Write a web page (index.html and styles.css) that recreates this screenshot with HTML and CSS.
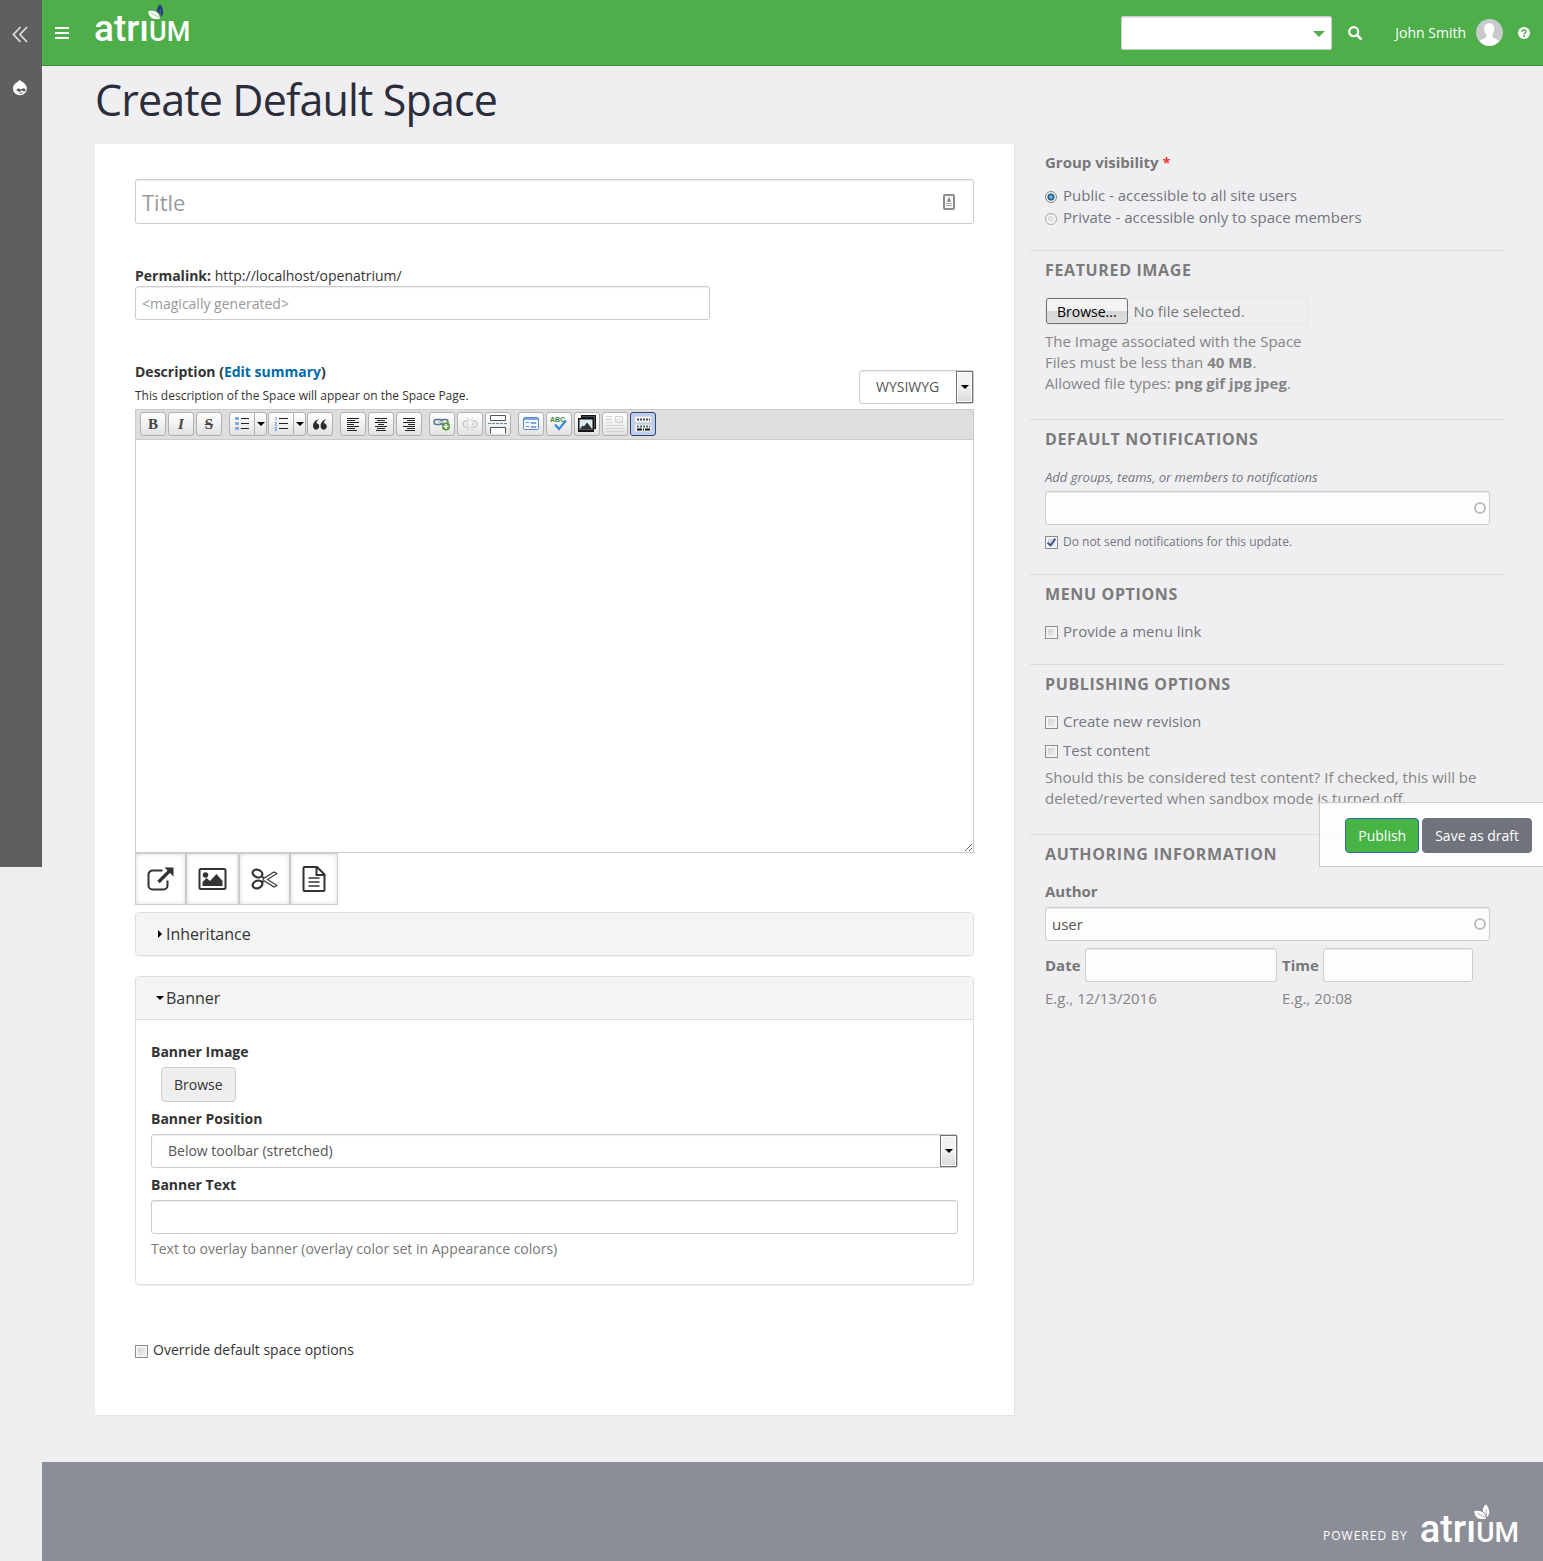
FILE: index.html
```html
<!DOCTYPE html>
<html lang="en">
<head>
<meta charset="utf-8">
<meta name="viewport" content="width=device-width, initial-scale=1">
<title>Create Default Space | Atrium</title>
<link rel="stylesheet" href="styles.css">
</head>
<body>
<div class="layout">
  <nav class="rail" aria-label="Administration">
    <a href="#" class="rail-link rail-collapse" aria-label="Collapse menu"><svg width="16" height="17" viewBox="0 0 16 17" fill="none" stroke="#ddd" stroke-width="1.8"><path d="M8.5 1 1.5 8.500l7 7.500M15 1 8 8.500l7 7.500"/></svg></a>
    <a href="#" class="rail-link" aria-label="Drupal"><svg width="16" height="17" viewBox="0 0 16 17"><path d="M7.500.5c.8 1.800 2.500 2 4.500 3.600 1.700 1.400 2.800 3.300 2.800 5.400 0 4-3.100 6.700-7 6.700S1 13.400 1 9.600C1 7.200 2 5.500 3.800 4 5.500 2.800 7 2.300 7.500.5z" fill="#fff"/><path d="M4.500 11c1-2.300 3-1.800 4.500-.6 1.500-1.300 3.300-1.600 4.300-.5 1 1.800-.6 3.300-2 2.400L9.500 11.500c-1.500 1.500-4 1.900-5-.5z" fill="#5f5f5f"/><path d="M7 13.800q1.800 1 3.600 0" fill="none" stroke="#5f5f5f"/></svg></a>
  </nav>

  <div class="page">
    <header class="topbar">
      <button type="button" class="icon-button menu-toggle" aria-label="Menu"><svg width="14" height="12" viewBox="0 0 14 12" fill="#fff"><path d="M0 0h14v2H0zM0 5h14v2H0zM0 10h14v2H0z"/></svg></button>
      <a href="#" class="brand" aria-label="Atrium home"><span class="brand-lower">atrı</span><span class="brand-caps">UM</span><svg class="brand-leaf" width="16" height="16" viewBox="0 0 16 16"><path d="M.3 7.200C4 6.300 8 7 10 9.500c1 1.300 1.800 3 2 4.900C7 16 .8 15 .3 7.200z" fill="#fff"/><path d="M12 .2c3 3.500 5 9 1 13-.5-2-1.400-3.600-3.400-5C8 6 9.500 2.500 12 .2z" fill="#273a83"/><path d="m3 9 8 4.500M12.200 5v8" fill="none" stroke="#4eae4a" stroke-width=".6"/></svg></a>
      <div class="topbar-tools">
        <div class="search-select">
          <select aria-label="Search in"><option></option></select>
        </div>
        <button type="button" class="icon-button search-button" aria-label="Search"><svg width="14" height="14" viewBox="0 0 14 14" fill="none" stroke="#fff"><circle cx="5.700" cy="5.700" r="4.500" stroke-width="2.200"/><path d="m9 9 3.800 3.800" stroke-width="2.600" stroke-linecap="round"/></svg></button>
        <a href="#" class="user"><span>John Smith</span><svg width="27" height="27" viewBox="0 0 27 27"><circle cx="13.500" cy="13.500" r="13.500" fill="#c9cacc"/><path d="M13.200 4.300c3.500 0 5.400 2.400 5 6-.2 2.500-1 4-2 5.200 0 2.200.2 2.800 1.500 3.500 2 .9 4 1.300 5.300 3.200-4.800 6.400-14.400 6.400-19.200 0C5 20.400 7 19.900 9 19c1.400-.7 1.600-1.400 1.500-3.400-1.200-1.200-2.200-3-2.300-5.400-.2-3.500 1.500-5.900 5-5.900z" fill="#fff"/></svg></a>
        <a href="#" class="help" aria-label="Help"><svg width="12" height="12" viewBox="0 0 12 12"><circle cx="6" cy="6" r="6" fill="#fff"/><path d="M4 4.700c.1-2.300 4.100-2.200 4 0 0 1.300-1.900 1.200-1.900 2.700" fill="none" stroke="#4eae4a" stroke-width="1.500"/><path d="M5.200 8.300h1.700v1.600H5.200z" fill="#4eae4a"/></svg></a>
      </div>
    </header>

    <main class="content">
      <h1>Create Default Space</h1>
      <form class="columns">
        <div class="card">
          <div class="title-field">
            <input type="text" class="input input-title" placeholder="Title" aria-label="Title">
            <svg class="title-icon" width="12" height="16" viewBox="0 0 12 16"><rect x="1" y="1" width="10" height="14" rx="1" fill="#f7f7f7" stroke="#8c8c8c" stroke-width="2"/><path d="m6 3 1.500 3v2h-3V6z" fill="#888"/><path d="M3 9.500h6M3 11.500h6" stroke="#aaa"/></svg>
          </div>

          <div class="permalink">
            <label for="permalink"><b>Permalink:</b> http://localhost/openatrium/</label>
            <input type="text" id="permalink" class="input" placeholder="&lt;magically generated&gt;">
          </div>

          <div class="description-head">
            <div class="description-labels">
              <div><label for="body" class="label">Description</label> <b>(<a href="#">Edit summary</a>)</b></div>
              <p class="note">This description of the Space will appear on the Space Page.</p>
            </div>
            <div class="select-wrap">
              <select class="input select" aria-label="Text format"><option>WYSIWYG</option></select>
            </div>
          </div>

          <div class="editor">
            <div class="toolbar" role="toolbar" aria-label="Editor toolbar">
              <div class="tool-group">
                <button type="button" class="tool tool-bold">B</button>
                <button type="button" class="tool tool-italic">I</button>
                <button type="button" class="tool tool-strike">S</button>
              </div>
              <div class="tool-group tool-group-lists">
                <span class="split">
                  <button type="button" class="tool" aria-label="Bulleted list"><svg width="14" height="14" viewBox="0 0 14 14"><g fill="#7ea6e0"><rect width="4" height="3" rx="1"/><rect y="5" width="4" height="3" rx="1"/><rect y="10" width="4" height="3" rx="1"/></g><path d="M6 1.500h8M6 6.500h8M6 11.500h8" stroke="#222"/></svg></button><button type="button" class="tool tool-arrow" aria-label="Bullet styles"></button>
                </span>
                <span class="split">
                  <button type="button" class="tool" aria-label="Numbered list"><svg width="14" height="14" viewBox="0 0 14 14"><path d="M1 .5h1v3M.500 5.500h2v1.500H1v1.500h2M.500 10.500h2v3h-2M1 12h1.500" fill="none" stroke="#7ea6e0"/><path d="M5 1.500h9M5 6.500h9M5 11.500h9" stroke="#222"/></svg></button><button type="button" class="tool tool-arrow" aria-label="Number styles"></button>
                </span>
                <button type="button" class="tool" aria-label="Block quote"><svg width="14" height="11" viewBox="0 0 14 11" fill="#2b2b2b"><path d="M6 .2C4.500 1.200 3.500 2.500 3.400 4.200 5 4.200 6.200 5.500 6.200 7.300S5 10.700 3.300 10.700 0 9.300 0 7C0 3.500 2.500.7 6 .2zM13.500.2C12 1.200 11 2.500 10.900 4.200c1.600 0 2.900 1.300 2.900 3.100s-1.300 3.400-3 3.400-3.200-1.400-3.200-3.700C7.600 3.500 10 .7 13.500.2z"/></svg></button>
              </div>
              <div class="tool-group">
                <button type="button" class="tool" aria-label="Align left"><svg width="14" height="13" viewBox="0 0 14 13" stroke="#222"><path d="M1 .5h12M1 2.500h8M1 4.500h12M1 6.500h7M1 8.500h12M1 10.500h8M1 12.500h10"/></svg></button>
                <button type="button" class="tool" aria-label="Align center"><svg width="14" height="13" viewBox="0 0 14 13" stroke="#222"><path d="M1 .5h12M3 2.500h8M1 4.500h12M4 6.500h6M1 8.500h12M3 10.500h8M2 12.500h10"/></svg></button>
                <button type="button" class="tool" aria-label="Align right"><svg width="14" height="13" viewBox="0 0 14 13" stroke="#222"><path d="M1 .5h12M5 2.500h8M1 4.500h12M6 6.500h7M1 8.500h12M5 10.500h8M3 12.500h10"/></svg></button>
              </div>
              <div class="tool-group">
                <button type="button" class="tool" aria-label="Link"><svg width="18" height="14" viewBox="0 0 18 14" fill="none"><rect x="1" y="2.500" width="8" height="5" rx="2.500" stroke="#5f7492" stroke-width="1.500"/><rect x="8" y="2.500" width="7" height="5" rx="2.500" stroke="#5f7492" stroke-width="1.500"/><path d="M5 5h6" stroke="#bfcbe0" stroke-width="2"/><circle cx="13" cy="9.500" r="4" fill="#579a37"/><path d="M13 7v5M10.500 9.500h5" stroke="#fff" stroke-width="1.500"/></svg></button>
                <button type="button" class="tool" aria-label="Unlink" disabled><svg width="16" height="14" viewBox="0 0 16 14" fill="none" stroke="#cdcdcd"><path d="M6.500 4H4a3 3 0 0 0 0 6h2.500M9.500 4H12a3 3 0 0 1 0 6H9.500M3.500 7H6M10 7h2.500" stroke-width="1.600"/><path d="m5 .5 2 3M11 .5l-2 3M5 13.500l2-3M11 13.500l-2-3"/></svg></button>
                <button type="button" class="tool" aria-label="Page break"><svg width="20" height="20" viewBox="0 0 20 20" fill="none"><path d="M2.500 1.500h15v5h-15zM2.500 19.500v-6h15v6" fill="#fff" stroke="#555"/><path d="M0 9.500h20" stroke="#6d89a8" stroke-dasharray="3 1"/></svg></button>
              </div>
              <div class="tool-group">
                <button type="button" class="tool" aria-label="Template"><svg width="16" height="14" viewBox="0 0 16 14" fill="none"><rect x=".5" y=".5" width="15" height="12" rx="1" fill="#f4f8ff" stroke="#5c86c5"/><path d="M1 2h14" stroke="#7fa5dc" stroke-width="2"/><path d="M3 5.500h3M3 9.500h3" stroke="#5c86c5"/><path d="M8 5.500h5v1H8zM8 9.500h5v1H8z" stroke="#7fa5dc"/></svg></button>
                <button type="button" class="tool" aria-label="Check spelling"><svg width="18" height="16" viewBox="0 0 18 16"><text x="0" y="6" class="abc">ABC</text><path d="m5 8.500 4 4.500 7-8.500" fill="none" stroke="#3c8bd8" stroke-width="2.200"/></svg></button>
                <button type="button" class="tool" aria-label="Media"><svg width="20" height="18" viewBox="0 0 20 18"><path d="M4 0h15v14h-2v3H1V3h3z" fill="#151515"/><path d="M2.500 4.500h13v10h-13z" fill="#dcebf3"/><path d="m2.500 14.500 3-4 1.500 1L10 7.500l2.500 3 3 4z" fill="#333"/><path d="M5 1.500h12.500V13" fill="none" stroke="#667" stroke-width=".7"/></svg></button>
                <button type="button" class="tool" aria-label="Teaser break" disabled><svg width="18" height="18" viewBox="0 0 18 18" fill="none" stroke="#d2d2d2"><path d="M0 1.500h6M0 4.500h6M0 7.500h6M0 10.500h18M0 13.500h18M0 16.500h18M9.500 1.500h7v6h-7zM10 7l2.500-3L16 7"/></svg></button>
                <button type="button" class="tool tool-active" aria-label="Show blocks"><svg width="18" height="16" viewBox="0 0 18 16" fill="none"><path d="M1 .5h16v6H1zM1 8.500h16v7H1z" fill="#f5f5f5" stroke="#ddd"/><path d="M3 3.500h13" stroke="#44506c" stroke-width="2" stroke-dasharray="2 1"/><path d="M3 10.500h13" stroke="#497b6c" stroke-width="2" stroke-dasharray="2 1"/><path d="M3 13.500h13" stroke="#111" stroke-width="2" stroke-dasharray="5 1 1 1"/></svg></button>
              </div>
            </div>
            <textarea id="body" class="editor-body"></textarea>
          </div>
          <div class="embeds">
            <button type="button" class="embed" aria-label="Insert link"><svg width="27" height="24" viewBox="0 0 26 24" fill="none" stroke="#333"><path d="M15 3.500H5A4 4 0 0 0 1 7.500v11a4 4 0 0 0 4 4h11a4 4 0 0 0 4-4v-5" stroke-width="2"/><path d="m11 15 11-11" stroke-width="3.400"/><path d="M17 .5h9v9z" fill="#333" stroke="none"/></svg></button>
            <button type="button" class="embed" aria-label="Insert image"><svg width="29" height="22" viewBox="0 0 28 22"><rect x="1" y="1" width="26" height="20" rx="1.500" fill="none" stroke="#333" stroke-width="2"/><circle cx="7" cy="7" r="2.800" fill="#333"/><path d="M4 18v-4l4-4 3.500 3L18 6l6 7v5z" fill="#333"/></svg></button>
            <button type="button" class="embed" aria-label="Insert snippet"><svg width="27" height="22" viewBox="0 0 26 22" fill="none" stroke="#333"><ellipse cx="6" cy="5.500" rx="5" ry="3.700" stroke-width="2.200" transform="rotate(22 6 5.500)"/><ellipse cx="6" cy="16.500" rx="5" ry="3.700" stroke-width="2.200" transform="rotate(-22 6 16.500)"/><path d="m10 8 3 2L22.500 4l3 1.500L16 11.500l9.500 6-3 1.500L13 13l-3 2M10 8l2 3-2 4" stroke-width="1.100"/></svg></button>
            <button type="button" class="embed" aria-label="Insert document"><svg width="24" height="26" viewBox="0 0 23 26" fill="none" stroke="#333" stroke-width="2"><path d="M2 1h12.500L22 8.500V24a1 1 0 0 1-1 1H2a1 1 0 0 1-1-1V2a1 1 0 0 1 1-1zM14 1v8h8"/><path d="M6 12h11M6 16h11M6 20h11" stroke-width="1.600"/></svg></button>
          </div>

          <details class="panel">
            <summary>Inheritance</summary>
          </details>

          <details class="panel" open>
            <summary>Banner</summary>
            <div class="panel-body">
              <div class="field">
                <span class="label">Banner Image</span>
                <button type="button" class="btn btn-default">Browse</button>
              </div>
              <div class="field">
                <label class="label" for="position">Banner Position</label>
                <div class="select-wrap">
                  <select id="position" class="input select"><option>Below toolbar (stretched)</option></select>
                </div>
              </div>
              <div class="field">
                <label class="label" for="banner-text">Banner Text</label>
                <input type="text" id="banner-text" class="input">
                <p class="hint">Text to overlay banner (overlay color set in Appearance colors)</p>
              </div>
            </div>
          </details>

          <label class="choice override"><input type="checkbox"> Override default space options</label>
        </div>

        <aside class="side">
          <fieldset class="section section-first">
            <legend>Group visibility <span class="required">*</span></legend>
            <label class="choice"><input type="radio" name="visibility" checked> Public - accessible to all site users</label>
            <label class="choice"><input type="radio" name="visibility"> Private - accessible only to space members</label>
          </fieldset>

          <section class="section section-image">
            <h2>Featured Image</h2>
            <div class="file">
              <input type="file" id="image" class="file-input">
              <label for="image" class="file-button">Browse...</label>
              <span>No file selected.</span>
            </div>
            <p>The Image associated with the Space<br>Files must be less than <b>40 MB</b>.<br>Allowed file types: <b>png gif jpg jpeg</b>.</p>
          </section>

          <section class="section section-notify">
            <h2>Default Notifications</h2>
            <label for="notify" class="lead">Add groups, teams, or members to notifications</label>
            <div class="lookup"><input type="text" id="notify" class="input"></div>
            <label class="choice choice-small"><input type="checkbox" checked> Do not send notifications for this update.</label>
          </section>

          <section class="section section-menu">
            <h2>Menu Options</h2>
            <label class="choice"><input type="checkbox"> Provide a menu link</label>
          </section>

          <section class="section section-publish">
            <h2>Publishing Options</h2>
            <label class="choice"><input type="checkbox"> Create new revision</label>
            <label class="choice"><input type="checkbox"> Test content</label>
            <p>Should this be considered test content? If checked, this will be deleted/reverted when sandbox mode is turned off.</p>
          </section>

          <section class="section section-author">
            <h2>Authoring Information</h2>
            <label for="author" class="side-label">Author</label>
            <div class="lookup"><input type="text" id="author" class="input" value="user"></div>
            <div class="when">
              <div class="when-date">
                <div class="when-row"><label for="date" class="side-label">Date</label><input type="text" id="date" class="input"></div>
                <p>E.g., 12/13/2016</p>
              </div>
              <div class="when-time">
                <div class="when-row"><label for="time" class="side-label">Time</label><input type="text" id="time" class="input"></div>
                <p>E.g., 20:08</p>
              </div>
            </div>
          </section>
        </aside>

        <div class="actions">
          <button type="submit" class="btn btn-primary">Publish</button>
          <button type="button" class="btn btn-dark">Save as draft</button>
        </div>
      </form>
    </main>

    <footer class="footer">
      <span>Powered by</span>
      <a href="#" class="brand" aria-label="Atrium"><span class="brand-lower">atrı</span><span class="brand-caps">UM</span><svg class="brand-leaf" width="16" height="16" viewBox="0 0 16 16"><path d="M.3 7.200C4 6.300 8 7 10 9.500c1 1.300 1.800 3 2 4.900C7 16 .8 15 .3 7.200z" fill="#fff"/><path d="M12 .2c3 3.500 5 9 1 13-.5-2-1.400-3.600-3.400-5C8 6 9.500 2.500 12 .2z" fill="#fff"/><path d="m3 9 8 4.500M12.200 5v8" fill="none" stroke="#8c8e97" stroke-width=".7"/></svg></a>
    </footer>
  </div>
</div>
</body>
</html>
```

FILE: styles.css
```css
:root {
  --fold: 867px;
  --green: #4eae4a;
  --border: #ccc;
  --muted: #777;
}

*, *::before, *::after { box-sizing: border-box; }

body {
  margin: 0;
  background: #efeff2;
  color: #333;
  font: 14px/20px "Open Sans", "Noto Sans", sans-serif;
}

button, input, select, textarea { font: inherit; color: inherit; }
h1, h2, p { margin: 0; }
a { color: #0069aa; text-decoration: none; }
svg { display: block; flex: none; }

.layout { position: relative; display: flex; min-height: 100vh; }

.rail {
  flex: none;
  display: flex;
  flex-direction: column;
  align-items: center;
  gap: 36px;
  width: 42px;
  height: var(--fold);
  padding: 26px 2px 0 0;
  background: #5f5f5f;
}
.rail-link { display: block; }

.page { flex: 1; min-width: 0; display: flex; flex-direction: column; }

/* Top bar */
.topbar {
  display: flex;
  align-items: center;
  height: 66px;
  padding: 0 13px;
  background: var(--green);
  border-bottom: 1px solid #3d8f3a;
}
.icon-button { padding: 0; border: 0; background: none; }
.brand {
  position: relative;
  color: #fff;
  font-family: Roboto, sans-serif;
  font-weight: 500;
  line-height: 40px;
  white-space: nowrap;
}
.brand-lower { font-size: 38px; }
.brand-caps { font-size: 28px; }
.brand-leaf { position: absolute; left: 54px; top: -5px; }
.topbar .brand { margin-left: 25px; }
.topbar .brand-lower { font-size: 37px; }
.topbar .brand-caps { font-size: 27px; }
.topbar-tools { display: flex; align-items: center; margin-left: auto; }
.search-select { position: relative; width: 211px; }
.search-select select {
  display: block;
  width: 100%;
  height: 34px;
  appearance: none;
  border: 1px solid var(--border);
  border-radius: 2px;
  background: #fff;
  box-shadow: inset 0 1px 1px rgba(0, 0, 0, .1);
}
.search-select::after {
  content: "";
  position: absolute;
  right: 7px;
  top: 15px;
  border: 6px solid transparent;
  border-top-color: var(--green);
  border-bottom: 0;
  pointer-events: none;
}
.search-button { margin-left: 16px; }
.user { display: flex; align-items: center; gap: 10px; margin: 0 15px 0 33px; color: #fff; }

/* Content */
.content { flex: 1; padding: 6px 38px 46px 53px; }
h1 {
  margin-bottom: 16px;
  color: #2b2e3a;
  font-size: 43px;
  font-weight: 400;
  line-height: 56px;
  letter-spacing: -.02em;
}
.columns {
  display: grid;
  grid-template-columns: minmax(0, 920fr) minmax(0, 475fr);
  gap: 15px;
  align-items: start;
}
.card {
  padding: 35px 40px 55px;
  background: #fff;
  border: solid #e3e3e6;
  border-width: 0 1px 1px 0;
}

.input {
  display: block;
  width: 100%;
  height: 34px;
  padding: 0 6px;
  border: 1px solid var(--border);
  border-radius: 3px;
  background: #fff;
  box-shadow: inset 0 1px 1px rgba(0, 0, 0, .08);
  color: #555;
}
.input::placeholder { color: #999; }
.label { font-weight: 700; }

.title-field { position: relative; margin-bottom: 42px; }
.input-title { height: 45px; font-size: 22px; }
.title-icon { position: absolute; right: 19px; top: 15px; }

.permalink { width: 575px; max-width: 100%; margin-bottom: 42px; }
.permalink label { display: block; }

.description-head { display: flex; justify-content: space-between; align-items: flex-end; }
.description-labels { padding-bottom: 3px; }
.note { margin-top: 4px; font-size: 12px; }
.description-head .select-wrap { width: 115px; margin-bottom: 5px; }

.select-wrap { position: relative; }
.select { appearance: none; padding: 0 16px; }
.select-wrap::before {
  content: "";
  position: absolute;
  top: 1px;
  right: 1px;
  bottom: 1px;
  width: 17px;
  border: 1px solid #707070;
  box-shadow: inset 0 0 0 1px #fff;
  background: linear-gradient(#f2f2f2 50%, #d8d8d8);
  pointer-events: none;
}
.select-wrap::after {
  content: "";
  position: absolute;
  top: 15px;
  right: 5px;
  border: 4px solid transparent;
  border-top-color: #000;
  border-bottom: 0;
  pointer-events: none;
}

/* Editor */
.editor { border: 1px solid var(--border); }
.toolbar {
  display: flex;
  flex-wrap: wrap;
  gap: 2px 7px;
  padding: 2px 4px 3px;
  background: #dedede;
  border-bottom: 1px solid var(--border);
}
.tool-group { display: flex; gap: 2px; }
.tool-group-lists { gap: 1px; }
.split { display: flex; }
.tool {
  display: flex;
  align-items: center;
  justify-content: center;
  width: 26px;
  height: 24px;
  padding: 0;
  border: 1px solid #b0b0b0;
  border-radius: 3px;
  background: linear-gradient(#fff, #e2e2e2);
  color: #444;
  font: 700 15px/20px "Liberation Serif", serif;
}
.tool-italic { font-style: italic; }
.tool-strike { text-decoration: line-through; }
.split .tool { border-radius: 3px 0 0 3px; }
.split .tool-arrow { width: 12px; border-left: 0; border-radius: 0 3px 3px 0; }
.tool-arrow::before {
  content: "";
  border: 4px solid transparent;
  border-top-color: #000;
  border-bottom: 0;
}
.tool-active { background: #bccff0; border-color: #34455f; }
.abc { font: 700 7px "Liberation Sans", sans-serif; fill: #3c8a4a; }
.editor-body {
  display: block;
  width: 100%;
  height: 412px;
  padding: 8px;
  border: 0;
  background: #fff;
  resize: vertical;
}
.embeds { display: flex; margin-bottom: 7px; }
.embed {
  height: 52px;
  padding: 0 11px;
  border: 1px solid var(--border);
  background: #fff;
  box-shadow: inset 0 0 4px rgba(0, 0, 0, .15);
}

/* Collapsible panels */
.panel {
  margin-bottom: 20px;
  border: 1px solid #ddd;
  border-radius: 4px;
  box-shadow: 0 1px 1px rgba(0, 0, 0, .05);
  overflow: hidden;
}
.panel summary {
  display: flex;
  align-items: center;
  gap: 2px;
  height: 42px;
  padding-left: 20px;
  background: #f4f4f4;
  font-size: 16px;
  list-style: none;
}
.panel summary::before {
  content: "";
  width: 6px;
  margin-left: 2px;
  border: 4px solid transparent;
  border-left-color: #000;
  border-right: 0;
}
.panel[open] summary { height: 43px; border-bottom: 1px solid #ddd; }
.panel[open] summary::before {
  width: 8px;
  margin-left: 0;
  border: 4px solid transparent;
  border-top-color: #000;
  border-bottom: 0;
}
.panel-body { padding: 22px 15px 18px; }
.field { margin-bottom: 7px; }
.field .label { display: block; margin-bottom: 5px; }
.hint { margin-top: 5px; color: var(--muted); }

.btn {
  height: 35px;
  padding: 0 12px;
  border: 1px solid var(--border);
  border-radius: 4px;
}
.btn-default { display: block; margin-left: 10px; background: #eee; }

/* Tick boxes and radios */
.choice { display: flex; align-items: center; gap: 5px; }
.choice input {
  flex: none;
  width: 13px;
  height: 13px;
  margin: 3px 0 0;
  appearance: none;
  border: 1px solid #8e8f8f;
  background: linear-gradient(135deg, #c8cbd0, #f6f6f6);
  box-shadow: inset 0 0 0 2px #f4f4f4;
}
.choice input[type="radio"] { width: 12px; height: 12px; margin-right: 1px; border-color: #aaa; border-radius: 50%; }
.choice input[type="radio"]:checked { background: radial-gradient(circle, #5ac0e8 0 1px, #1c4a70 3px, #eee 4px); box-shadow: none; border-color: #888; }
.choice input[type="checkbox"]:checked::before {
  content: "";
  display: block;
  width: 5px;
  height: 9px;
  margin-left: 3px;
  border: solid #44549a;
  border-width: 0 2px 2px 0;
  transform: rotate(35deg);
}
.override { margin-top: 55px; }

/* Side column */
.side { color: var(--muted); font-size: 15px; line-height: 21px; }
.section {
  min-width: 0;
  margin: 0;
  padding: 8px 15px 25px;
  border: 0;
  border-top: 1px solid #dcdce0;
}
.section-first { margin-top: 7px; padding-top: 0; padding-bottom: 22px; border-top: 0; }
.section-first legend { padding: 0; margin-bottom: 11px; font-weight: 700; line-height: 22px; }
.section .choice { min-height: 22px; color: #74757e; }
.required { color: #f33; }
h2 {
  color: #7b7b7b;
  font-size: 16px;
  line-height: 22px;
  text-transform: uppercase;
  letter-spacing: .04em;
}
.side p { color: #858585; }
.file {
  position: relative;
  display: flex;
  align-items: center;
  gap: 6px;
  width: 263px;
  max-width: 100%;
  height: 28px;
  margin: 16px 0 6px;
  box-shadow: inset 0 0 2px rgba(0, 0, 0, .12);
}
.file-input { position: absolute; width: 1px; height: 1px; opacity: 0; }
.file-button {
  height: 26px;
  margin-left: 1px;
  padding: 0 10px;
  border: 1px solid #707070;
  border-radius: 3px;
  background: linear-gradient(#f3f3f3 50%, #d6d6d6 50%, #dedede);
  color: #000;
  font-size: 14px;
  line-height: 26px;
}
.section-notify { padding-bottom: 22px; }
.lead { display: block; margin: 17px 0 3px; font-size: 13px; font-style: italic; color: #74757e; }
.side .input { background: #fdfdfd; }
.lookup { position: relative; }
.lookup::after {
  content: "";
  position: absolute;
  right: 4px;
  top: 11px;
  width: 12px;
  height: 12px;
  border: 2px solid #bbb;
  border-radius: 50%;
  pointer-events: none;
}
.section .choice-small { margin-top: 5px; font-size: 12px; }
.section-menu { padding-bottom: 22px; }
.section-menu .choice { margin-top: 15px; }
.section-publish .choice { margin-top: 15px; }
.section-publish .choice + .choice { margin: 7px 0 6px; }
.section-author { padding-bottom: 0; }
.side-label { display: block; font-weight: 700; }
.section-author > .side-label { margin: 16px 0 5px; }
.when { display: flex; gap: 5px; margin-top: 7px; }
.when-date { width: 232px; }
.when-time { width: 191px; }
.when-row { display: flex; align-items: center; gap: 4px; margin-bottom: 6px; }
.when-row .input { flex: 1; min-width: 0; }

/* Floating save bar, resting on the fold */
.actions {
  position: absolute;
  top: calc(var(--fold) - 65px);
  right: 0;
  display: flex;
  gap: 3px;
  padding: 15px 11px 13px 25px;
  border: 1px solid var(--border);
  border-right: 0;
  background: rgba(255, 255, 255, .85);
}
.btn-primary { background: #48b445; border-color: #2a6d9e; color: #fff; }
.btn-dark { background: #70727c; border-color: #70727c; color: #fff; }

.footer {
  display: flex;
  justify-content: flex-end;
  align-items: flex-end;
  gap: 12px;
  height: 99px;
  padding: 0 24px 3px 0;
  background: #8c8e97;
  color: #fff;
  font-size: 12px;
  letter-spacing: 1px;
  text-transform: uppercase;
}
.footer > span { margin-bottom: 12px; }
.footer .brand { letter-spacing: 0; text-transform: none; }
```
